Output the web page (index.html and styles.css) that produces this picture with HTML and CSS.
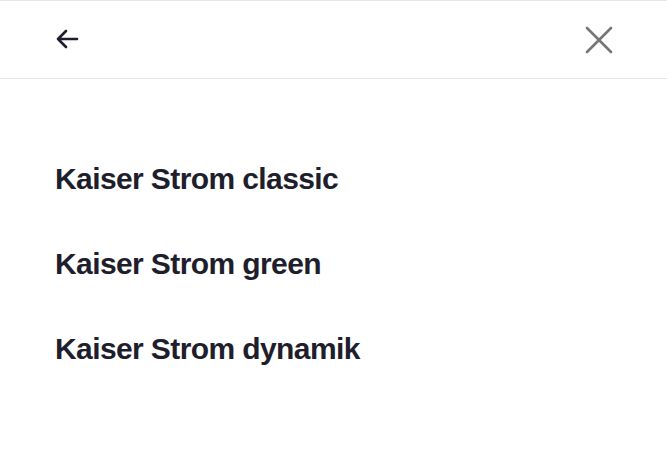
FILE: index.html
```html
<!DOCTYPE html>
<html lang="de">
<head>
    <meta charset="UTF-8">
    <meta name="viewport" content="width=device-width, initial-scale=1.0">
    <title>Kaiser Strom</title>
    <link rel="stylesheet" href="styles.css">
</head>
<body>
    <div class="topbar">
        <div class="back">
            <svg width="24" height="20" viewBox="0 0 24 20">
                <path d="M22 10H3M11 2L3 10l8 8" fill="none" stroke="#1e1e2d" stroke-width="2.6" stroke-linecap="round" stroke-linejoin="round"/>
            </svg>
        </div>
        <div class="close">
            <svg width="28" height="28" viewBox="0 0 28 28">
                <path d="M2 2l24 24M26 2L2 26" fill="none" stroke="#767676" stroke-width="2.6" stroke-linecap="round"/>
            </svg>
        </div>
    </div>
    <div class="list">
        <div class="item">Kaiser Strom classic</div>
        <div class="item">Kaiser Strom green</div>
        <div class="item">Kaiser Strom dynamik</div>
    </div>
</body>
</html>
```

FILE: styles.css
```css
body {
    margin: 0;
    background: white;
    font-family: "Liberation Sans", sans-serif;
    color: #1e1e2d;
}
.topbar {
    height: 77px;
    border-top: 1px solid #e4e6e8;
    border-bottom: 1px solid #e4e6e8;
    display: flex;
    align-items: center;
    justify-content: space-between;
    padding: 0 54px 0 55px;
}
.back, .close {
    display: flex;
}
.back svg {
    margin-top: -2px;
}
.list {
    padding: 80px 55px 0;
    display: flex;
    flex-direction: column;
    gap: 45px;
}
.item {
    font-size: 30px;
    font-weight: bold;
    line-height: 40px;
    letter-spacing: -0.6px;
}
```
